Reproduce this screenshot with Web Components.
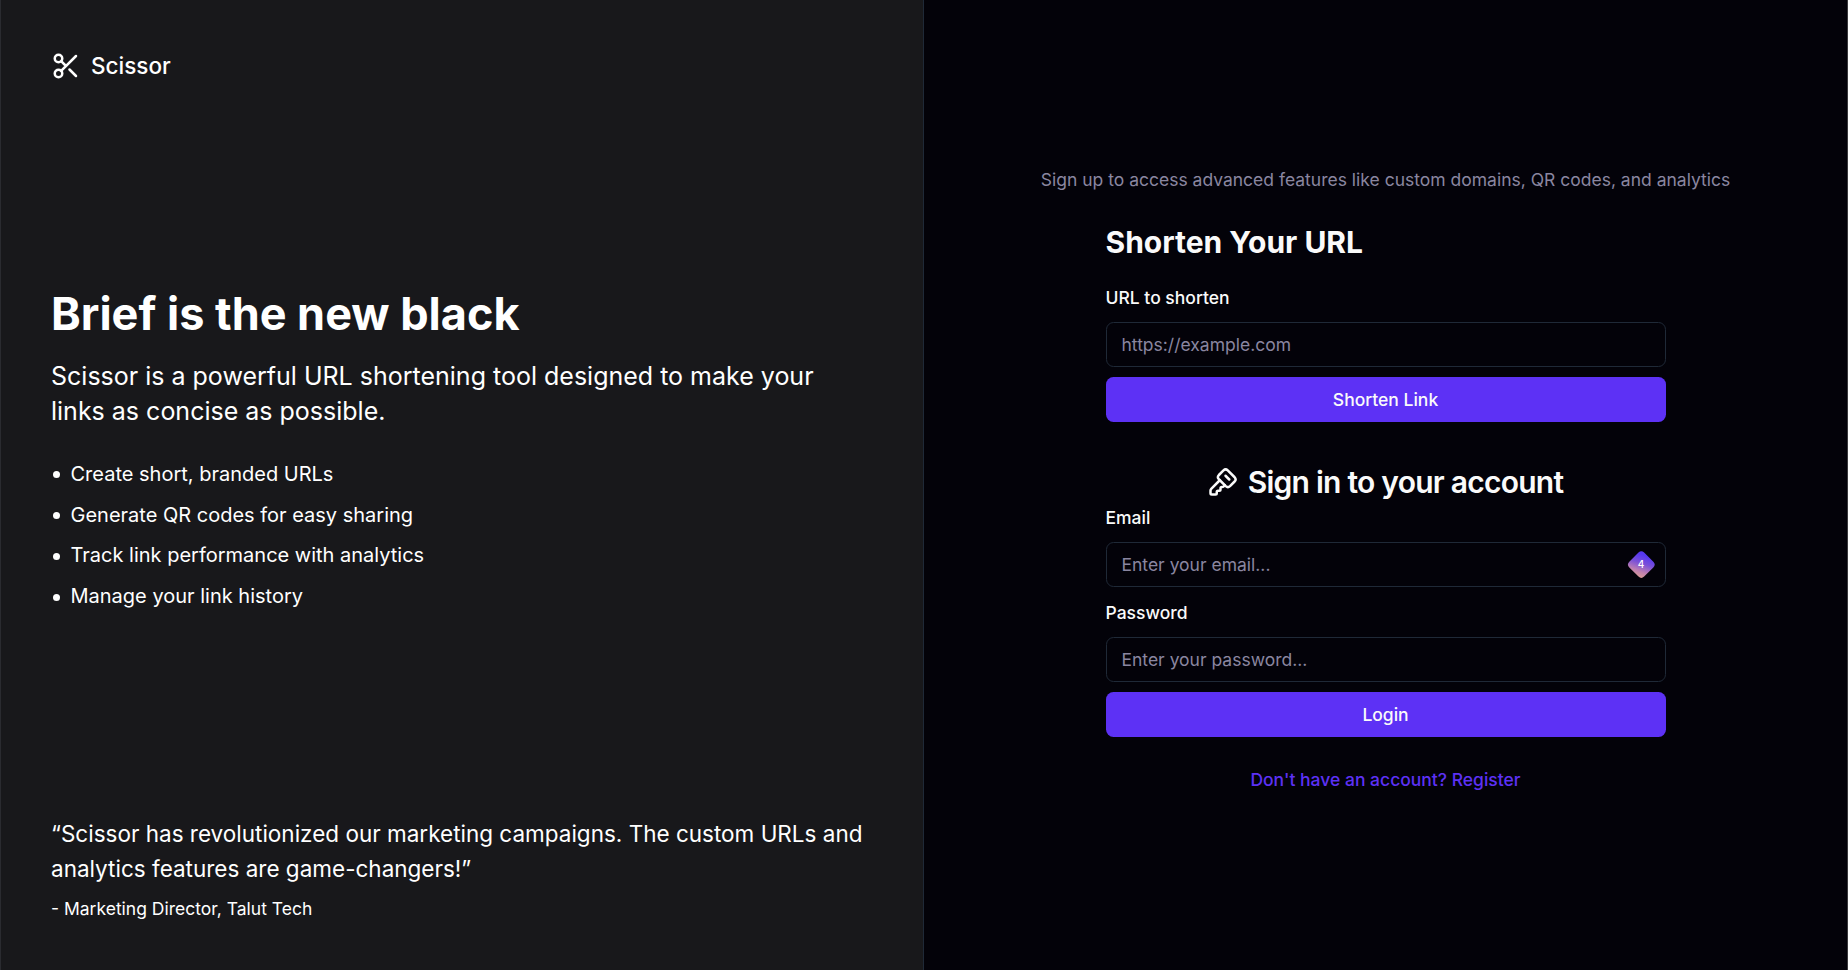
<!DOCTYPE html>
<html lang="en">
<head>
<meta charset="utf-8">
<title>Scissor</title>
<style>
html,body{margin:0;height:100%;background:#030209}
body{font-family:Inter,"Liberation Sans",sans-serif;color:#fafafa;overflow:hidden}
</style>
</head>
<body>
<scissor-app></scissor-app>
<script>
const define = (name, html) => customElements.define(name, class extends HTMLElement {
  constructor() {
    super();
    const t = document.createElement('template');
    t.innerHTML = html;
    this.attachShadow({mode: 'open'}).append(t.content.cloneNode(true));
  }
});

define('brand-mark', `
<style>
:host{display:flex;align-items:center;gap:10px;height:30px;color:#fff;font-size:22.5px;font-weight:500;line-height:30px}
svg{width:30px;height:30px;flex:none}
</style>
<svg viewBox="0 0 24 24" fill="none" stroke="currentColor" stroke-width="2" stroke-linecap="round" stroke-linejoin="round"><circle cx="6" cy="6" r="3"/><path d="M8.12 8.12 12 12M20 4 8.12 15.88"/><circle cx="6" cy="18" r="3"/><path d="M14.8 14.8 20 20"/></svg>
<span><slot></slot></span>`);

define('feature-list', `
<style>
:host{display:block}
ul{margin:0;padding:0;list-style:none;display:grid;gap:10.75px}
li{display:flex;align-items:center;font-size:20px;line-height:30px}
li::before{content:"";flex:none;width:7px;height:7px;margin:2px 10.5px 0 2px;border-radius:50%;background:currentColor}
</style>
<ul><li>Create short, branded URLs</li><li>Generate QR codes for easy sharing</li><li>Track link performance with analytics</li><li>Manage your link history</li></ul>`);

define('promo-panel', `
<style>
:host{display:flex;flex-direction:column;justify-content:space-between;box-sizing:border-box;padding:51px 50px 49px;background:#18181b;color:#fff;border:1px solid #2a2b30;border-width:0 1px;border-right-color:#1f2937}
section{padding-top:2.8px}
h1{margin:0;font-size:45px;line-height:50px;font-weight:700}
p{margin:20px 0 30px;font-size:25px;line-height:35px}
blockquote{margin:0;font-size:22.5px;line-height:35px}
footer{margin-top:10px;font-size:17.5px;line-height:25px}
</style>
<brand-mark>Scissor</brand-mark>
<section><h1>Brief is the new black</h1><p>Scissor is a powerful URL shortening tool designed to make your links as concise as possible.</p><feature-list></feature-list></section>
<blockquote>“Scissor has revolutionized our marketing campaigns. The custom URLs and analytics features are game-changers!”<footer>- Marketing Director, Talut Tech</footer></blockquote>`);

define('vault-badge', `
<style>
:host{display:grid;place-items:center;position:relative;width:26px;height:26px}
i{position:absolute;inset:2.7px;border-radius:4px;transform:rotate(45deg);background:linear-gradient(155deg,#5638f0 15%,#7a50d8 45%,#c080b0 75%,#dda190)}
b{position:relative;left:-.5px;top:-1px;font:500 10px/12px Inter,sans-serif;color:#fff}
</style>
<i></i><b><slot></slot></b>`);

customElements.define('text-field', class extends HTMLElement {
  constructor() {
    super();
    this.attachShadow({mode: 'open'}).innerHTML = `
<style>
:host{display:grid;gap:12px;font-size:17.5px;line-height:25px}
label{font-weight:500}
.box{display:flex;align-items:center;justify-content:space-between;box-sizing:border-box;height:45px;padding:0 10px 0 15px;border:1px solid #1f2937;border-radius:7.5px}
.hint{color:#8a86a0}
</style>
<label></label><div class="box"><span class="hint"></span><slot></slot></div>`;
    this.shadowRoot.querySelector('label').textContent = this.getAttribute('label');
    this.shadowRoot.querySelector('.hint').textContent = this.getAttribute('placeholder');
  }
});

define('primary-button', `
<style>
:host{display:block;margin-top:10px}
button{display:block;width:100%;height:45px;padding:0;border:0;border-radius:7.5px;background:#5d31f5;color:#fafafa;font:500 17.5px/25px Inter,sans-serif}
</style>
<button><slot></slot></button>`);

define('account-panel', `
<style>
:host{display:flex;flex-direction:column;align-items:center;box-sizing:border-box;padding-top:167px;border-right:1px solid #3a3a3d}
.lead{margin:0;font-size:17.5px;line-height:25px;color:#8a86a0}
main{width:560px;margin-top:30px}
h2,h3{margin:0;font-size:30px;line-height:40px}
h2{font-weight:700;margin-bottom:23px}
h3{display:flex;justify-content:center;align-items:center;gap:10px;margin:40px 0 3px;font-weight:600;letter-spacing:-.75px}
svg{width:30px;height:30px}
.pw{margin-top:13px}
a{display:block;margin-top:30px;text-align:center;color:#5d31f5;font-size:17.5px;line-height:25px;font-weight:500}
</style>
<p class="lead">Sign up to access advanced features like custom domains, QR codes, and analytics</p>
<main>
<h2>Shorten Your URL</h2>
<text-field label="URL to shorten" placeholder="https://example.com"></text-field>
<primary-button>Shorten Link</primary-button>
<h3><svg viewBox="0 0 24 24" fill="none" stroke="currentColor" stroke-width="2" stroke-linecap="round" stroke-linejoin="round"><path d="M12.4 2.7a2.5 2.5 0 0 1 3.4 0l5.5 5.5a2.5 2.5 0 0 1 0 3.4l-3.7 3.7a2.5 2.5 0 0 1-3.4 0L8.7 9.8a2.5 2.5 0 0 1 0-3.4z"/><path d="m14 7 3 3"/><path d="m9.4 10.6-6.814 6.814A2 2 0 0 0 2 18.828V21a1 1 0 0 0 1 1h3a1 1 0 0 0 1-1v-1a1 1 0 0 1 1-1h1a1 1 0 0 0 1-1v-1a1 1 0 0 1 1-1h.172a2 2 0 0 0 1.414-.586l.814-.814"/></svg><span>Sign in to your account</span></h3>
<text-field label="Email" placeholder="Enter your email..."><vault-badge>4</vault-badge></text-field>
<text-field class="pw" label="Password" placeholder="Enter your password..."></text-field>
<primary-button>Login</primary-button>
<a>Don't have an account? Register</a>
</main>`);

define('scissor-app', `
<style>:host{display:grid;grid-template-columns:1fr 1fr;height:100vh}</style>
<promo-panel></promo-panel><account-panel></account-panel>`);
</script>
</body>
</html>
